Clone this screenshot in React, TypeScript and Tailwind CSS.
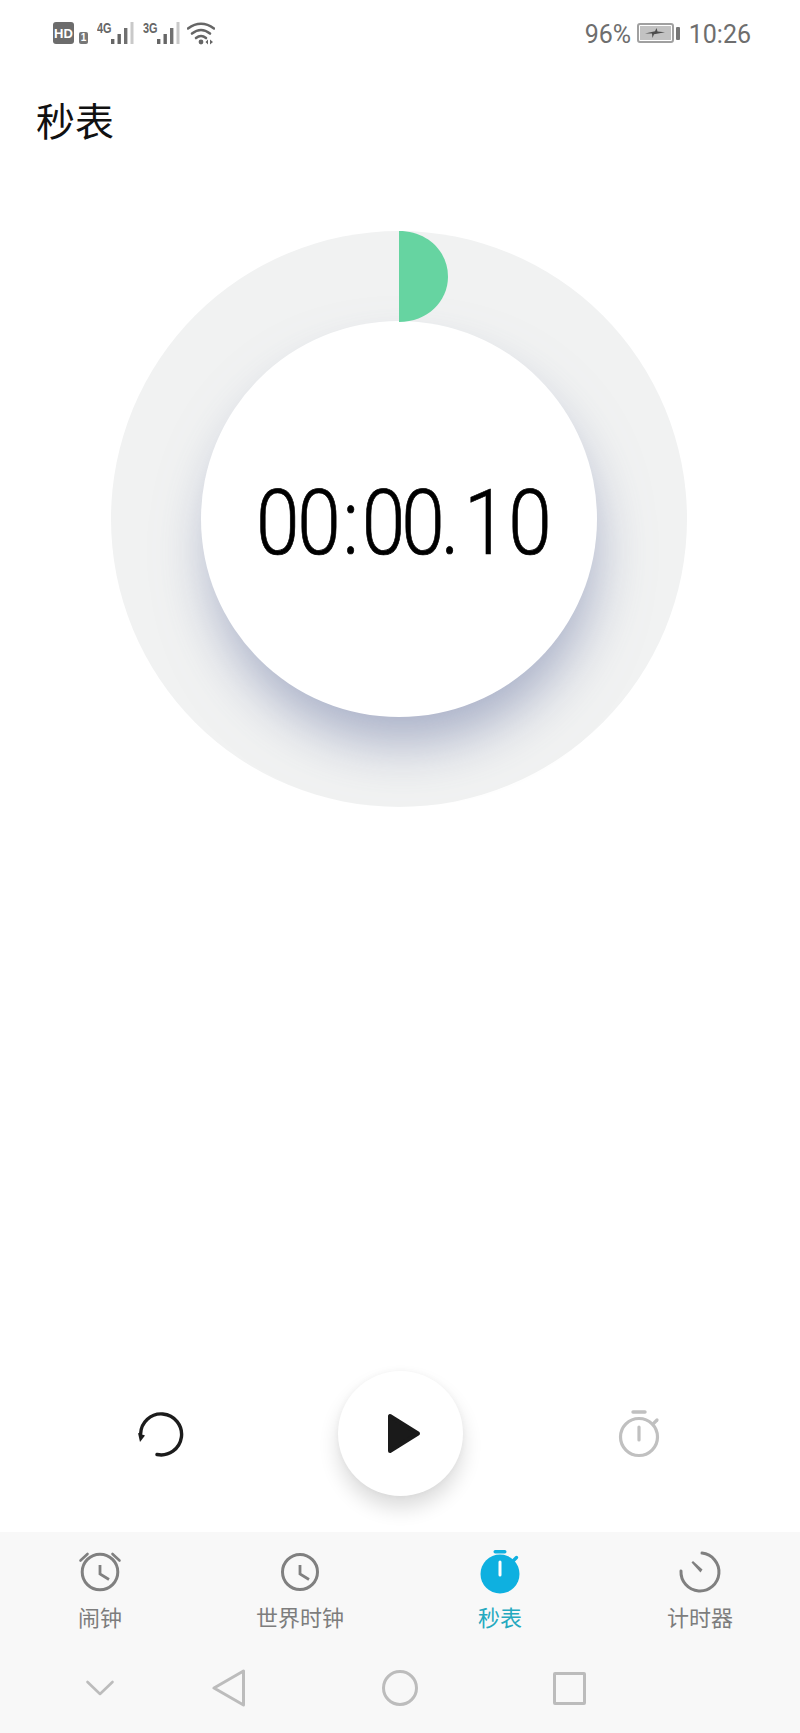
import React from "react";

const cjk = "font-['Noto_Sans_CJK_SC','Noto_Sans',sans-serif]";

function Bars() {
  return (
    <svg width="24" height="23" viewBox="0 0 24 23" className="block">
      <rect x="1" y="17" width="3.4" height="5" fill="#666" />
      <rect x="7.5" y="12" width="3.4" height="10" fill="#666" />
      <rect x="14" y="6" width="3.4" height="16" fill="#707070" />
      <rect x="20.5" y="0" width="3" height="22" fill="#c9c9c9" />
    </svg>
  );
}

function Net({ label }: { label: string }) {
  return (
    <div className="flex items-start h-[23px]">
      <span className="w-[13px] text-[14px] leading-[12px] font-bold text-[#666] scale-x-[0.78] origin-left font-['Liberation_Sans',sans-serif]">
        {label}
      </span>
      <Bars />
    </div>
  );
}

function StatusBar() {
  return (
    <div className="flex h-[68px] pl-[53px] pr-[49px] pt-[22px] items-start justify-between">
      <div className="flex items-start">
        <div className="w-[21px] h-[22px] rounded-[3px] bg-[#6c6c6c] flex items-center justify-center text-white text-[13px] font-bold leading-none font-['Liberation_Sans',sans-serif]">
          HD
        </div>
        <div className="ml-[5px] mt-[10px] w-[9px] h-[12px] rounded-[2px] bg-[#777] flex items-center justify-center text-white text-[10px] font-bold leading-none font-['Liberation_Sans',sans-serif]">
          1
        </div>
        <div className="ml-[9px]">
          <Net label="4G" />
        </div>
        <div className="ml-[9px]">
          <Net label="3G" />
        </div>
        <svg width="28" height="23" viewBox="0 0 28 23" className="ml-[7px] block" fill="none" stroke="#666" strokeWidth="2.6" strokeLinecap="round">
          <path d="M1 6.5Q14 -3 27 6.5" />
          <path d="M5 11.5Q14 4.5 23 11.5" />
          <path d="M9 16Q14 12 19 16" />
          <circle cx="14" cy="20" r="2.4" fill="#666" stroke="none" />
          <path d="M21 17.5L18.5 20L21 22.5ZM23 17.5L26 20L23 22.5Z" fill="#666" stroke="none" />
        </svg>
      </div>
      <div className="flex items-center h-[22px] text-[25px] leading-none text-[#6e6e6e] font-['Roboto',sans-serif]">
        <span className="w-[52px] pt-[2px]">96%</span>
        <div className="w-[37px] h-[20px] rounded-[3px] border-2 border-[#a0a0a0] p-[1px]">
          <div className="w-full h-full bg-[#c2c2c2] flex items-center justify-center">
            <svg width="20" height="10" viewBox="0 0 20 10" className="block">
              <path d="M0 5.5L10 3.2L11.5 0L12.5 3.6L20 4.2L9 6.2L7.5 10L7 5.6Z" fill="#4c4c4c" />
            </svg>
          </div>
        </div>
        <div className="w-[4px] h-[13px] ml-[2px] rounded-[1px] bg-[#777]" />
        <span className="ml-[9px] pt-[2px]">10:26</span>
      </div>
    </div>
  );
}

function Dial() {
  return (
    <div className="relative ml-[111px] mt-[82px] w-[576px] h-[576px] rounded-full bg-[#f1f2f2] flex items-center justify-center">
      <svg width="49" height="91" viewBox="0 0 49 91" className="absolute left-[288px] top-0 block">
        <path d="M0 0C28 0 49 20 49 45.5C49 71 28 91 0 91Z" fill="#66d4a1" />
      </svg>
      <div className="w-[396px] h-[396px] rounded-full bg-white shadow-[4px_32px_54px_-6px_rgba(118,130,170,0.6)] flex items-center justify-center">
        <div className="flex shrink-0 mt-[9px] ml-[9px] scale-x-[0.87] text-[90px] leading-none font-light text-black whitespace-nowrap [-webkit-text-stroke:0.7px_#000] font-['Roboto',sans-serif]">
          <span className="tracking-[-2.5px]">00</span>
          <span className="ml-[4.6px]">:</span>
          <span className="ml-[3.2px] tracking-[-4.5px]">00</span>
          <span>.</span>
          <span className="ml-[5px] tracking-[-2px]">1</span>
          <span className="ml-[3px]">0</span>
        </div>
      </div>
    </div>
  );
}

function Controls() {
  return (
    <div className="grid grid-cols-[320px_160px_320px] items-center mt-[564px]">
      <div className="flex justify-center">
        <svg width="48" height="48" viewBox="0 0 48 48" fill="none" className="block ml-[2px]">
          <path d="M20 44.5A20.5 20.5 0 1 0 3.6 24" stroke="#1c1c1c" strokeWidth="3.4" strokeLinecap="round" />
          <path d="M1 23L8 25.5L3 32Z" fill="#1c1c1c" />
        </svg>
      </div>
      <div className="flex justify-center">
        <div className="w-[125px] h-[125px] rounded-full bg-white shadow-[0_12px_20px_rgba(0,0,0,0.14),0_0_6px_rgba(0,0,0,0.04)] flex items-center justify-center">
          <svg width="34" height="41" viewBox="0 0 34 41" className="block ml-[7px]">
            <path d="M3 3V38L31 20.5Z" fill="#1a1a1a" stroke="#1a1a1a" strokeWidth="4" strokeLinejoin="round" />
          </svg>
        </div>
      </div>
      <div className="flex justify-center">
        <svg width="44" height="48" viewBox="0 0 44 48" fill="none" stroke="#c0c0c0" strokeWidth="3.2" className="block" strokeLinecap="round">
          <circle cx="21" cy="27" r="18.5" />
          <path d="M15 2H27" strokeWidth="3.4" />
          <path d="M21 17V30" />
          <path d="M35.5 13.5L39 10" />
        </svg>
      </div>
    </div>
  );
}

const hands = "M22 15V24L31 29.5";

function TabIcon({ kind }: { kind: string }) {
  if (kind === "alarm")
    return (
      <svg width="44" height="44" viewBox="0 0 44 44" fill="none" stroke="#808080" strokeWidth="3" className="block">
        <circle cx="22" cy="22" r="17.8" />
        <path d={hands} strokeWidth="2.8" />
        <path d="M2.5 10.5L9.5 4M41.5 10.5L34.5 4" strokeLinecap="round" strokeWidth="2.6" />
      </svg>
    );
  if (kind === "world")
    return (
      <svg width="44" height="44" viewBox="0 0 44 44" fill="none" stroke="#808080" strokeWidth="3" className="block">
        <circle cx="22" cy="22" r="17.5" />
        <path d={hands} strokeWidth="2.8" />
      </svg>
    );
  if (kind === "watch")
    return (
      <svg width="44" height="44" viewBox="0 0 44 44" className="block">
        <circle cx="22" cy="24" r="19.5" fill="#0eb0e0" />
        <rect x="15.5" y="0" width="13" height="3.4" rx="1.7" fill="#0eb0e0" />
        <path d="M35 11L38.5 7.5" stroke="#0eb0e0" strokeWidth="3.4" strokeLinecap="round" />
        <path d="M22 12V25" stroke="#fff" strokeWidth="3" strokeLinecap="round" />
      </svg>
    );
  return (
    <svg width="44" height="44" viewBox="0 0 44 44" fill="none" className="block">
      <path d="M24 3.1A19 19 0 1 1 3 21" stroke="#808080" strokeWidth="3" strokeLinecap="round" />
      <path d="M13.5 12.5L15 11L24.5 19.5L22.5 22.5Z" fill="#808080" />
    </svg>
  );
}

function Tab({ kind, label, active }: { kind: string; label: string; active?: boolean }) {
  return (
    <div className="flex flex-col items-center">
      <TabIcon kind={kind} />
      <span className={`mt-[7px] h-[30px] text-[22px] leading-[30px] ${cjk} ${active ? "text-[#25a9bf]" : "text-[#7d7d7d]"}`}>
        {label}
      </span>
    </div>
  );
}

function BottomBar() {
  return (
    <div className="mt-[36px] h-[202px] bg-[#f8f8f8] pt-[18px]">
      <div className="grid grid-cols-4">
        <Tab kind="alarm" label="闹钟" />
        <Tab kind="world" label="世界时钟" />
        <Tab kind="watch" label="秒表" active />
        <Tab kind="timer" label="计时器" />
      </div>
      <div className="mt-[35px] grid grid-cols-[200px_58px_284px_58px] items-center h-[44px]">
        <div className="flex justify-center">
          <svg width="30" height="18" viewBox="0 0 30 18" fill="none" className="block">
            <path d="M2.5 3L15 15L27.5 3" stroke="#bcbcbc" strokeWidth="2.6" strokeLinecap="round" strokeLinejoin="round" />
          </svg>
        </div>
        <div className="flex justify-center">
          <svg width="34" height="38" viewBox="0 0 34 38" fill="none" className="block">
            <path d="M31.5 2V36L2 19Z" stroke="#bcbcbc" strokeWidth="3" strokeLinejoin="round" />
          </svg>
        </div>
        <div className="flex justify-center">
          <div className="w-[36px] h-[36px] rounded-full border-[3px] border-[#bcbcbc]" />
        </div>
        <div className="flex justify-center">
          <div className="w-[33px] h-[33px] ml-[-4px] rounded-[2px] border-[3px] border-[#bcbcbc]" />
        </div>
      </div>
    </div>
  );
}

export default function App() {
  return (
    <div className="w-[800px] h-[1733px] bg-white overflow-hidden">
      <StatusBar />
      <div className={`pl-[36px] h-[81px] pt-[27px] text-[39px] leading-[48px] text-[#111] ${cjk}`}>秒表</div>
      <Dial />
      <Controls />
      <BottomBar />
    </div>
  );
}
